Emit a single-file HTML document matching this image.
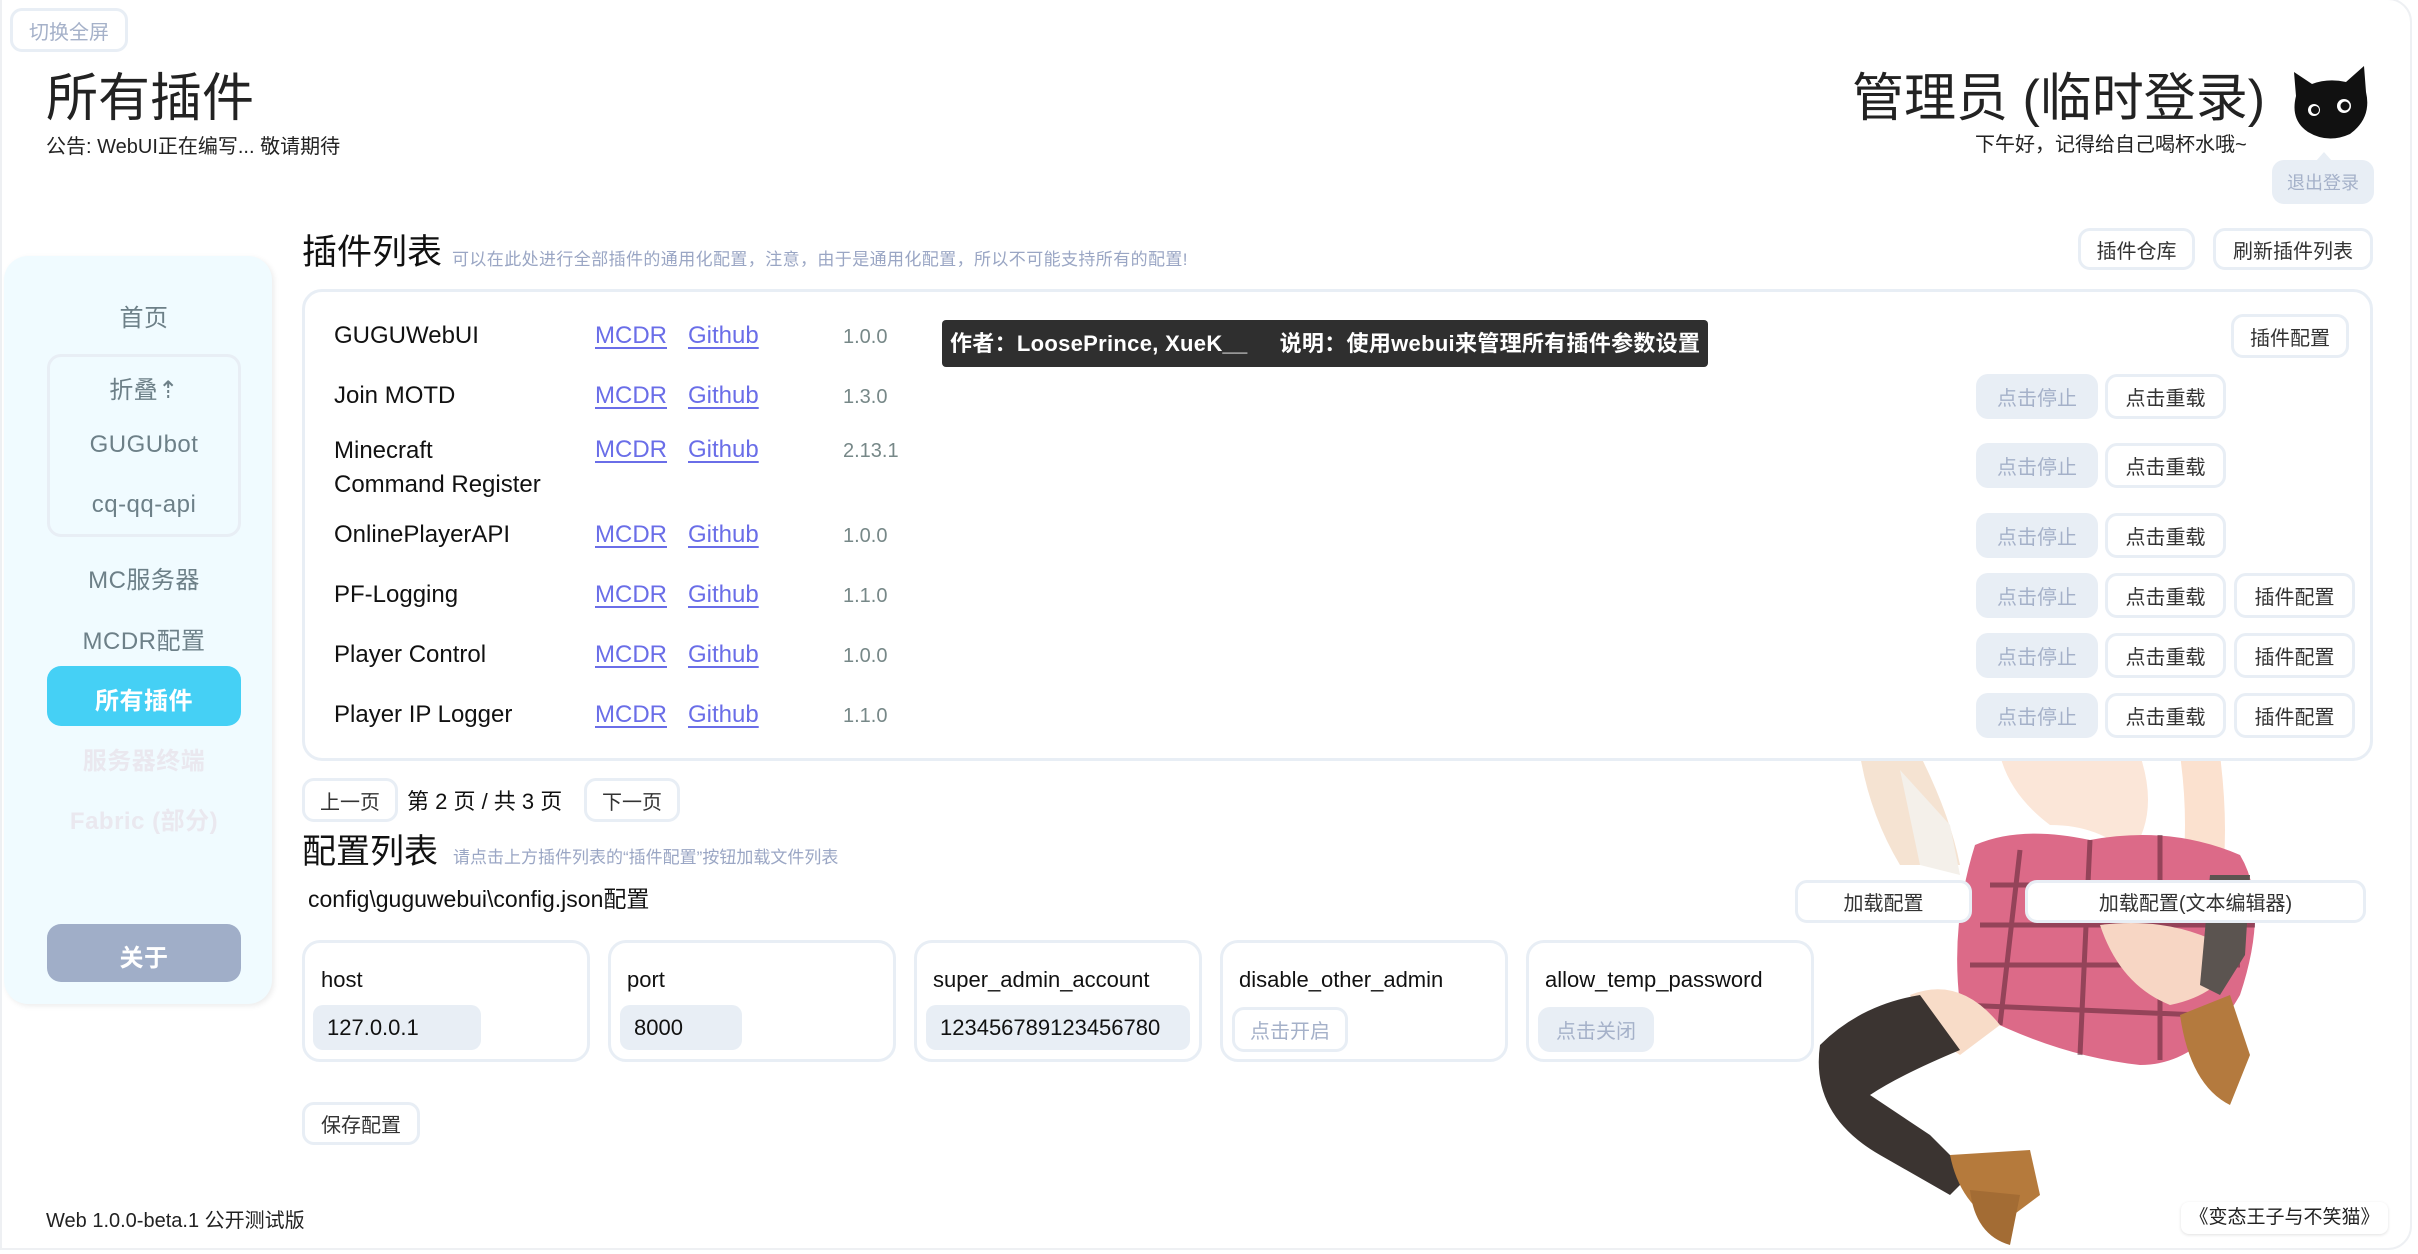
<!DOCTYPE html>
<html><head><meta charset="utf-8">
<style>
*{box-sizing:border-box;margin:0;padding:0}
body{width:2418px;height:1254px;overflow:hidden;background:#fff;font-family:"Liberation Sans","Noto Sans CJK SC",sans-serif;color:#222;position:relative}
.a{position:absolute;white-space:nowrap}
.frame{position:absolute;left:0;top:-2px;width:2412px;height:1252px;border:2px solid #eef0f3;border-radius:0 24px 24px 0}
.btn{position:absolute;border:3px solid #e8eef5;border-radius:12px;background:#fff;display:flex;align-items:center;justify-content:center;font-size:20px;color:#333}
.dis{background:#e8eef5;color:#a5b1c9}
.side{position:absolute;left:4px;top:256px;width:268px;height:748px;background:#f0fbff;border-radius:24px;box-shadow:2px 2px 6px rgba(0,0,0,.08)}
.si{position:absolute;left:0;width:280px;text-align:center;font-size:24px;color:#6d8088;letter-spacing:0.5px}
.row{position:absolute;font-size:24px;color:#111}
.lk{position:absolute;font-size:24px;color:#6a6ee8;text-decoration:underline;text-underline-offset:4px}
.ver{position:absolute;font-size:20px;color:#778888}
.card{position:absolute;top:940px;height:122px;border:3px solid #e8eef5;border-radius:18px;background:#fff}
.card .l{position:absolute;left:16px;top:24px;font-size:22px;color:#111}
.inp{position:absolute;top:62px;height:45px;background:#e8eef5;border-radius:10px;font-size:22px;padding-left:14px;line-height:45px;color:#111;overflow:hidden}
</style></head><body>
<div class="frame"></div>
<div class="btn dis" style="left:10px;top:8px;width:118px;height:44px;background:#fff;color:#a5b1c9;border-color:#e8eef5">切换全屏</div>
<div class="a" style="left:46px;top:56px;font-size:52px;color:#222">所有插件</div>
<div class="a" style="left:46px;top:130px;font-size:20px;color:#222">公告: WebUI正在编写... 敬请期待</div>

<div class="a" style="left:1852px;top:56px;font-size:52px;color:#222">管理员 (临时登录)</div>
<div class="a" style="left:1975px;top:128px;font-size:20px;color:#222">下午好，记得给自己喝杯水哦~</div>
<svg class="a" style="left:2288px;top:62px" width="84" height="80" viewBox="0 0 84 80">
<path d="M8 34 L6 10 L24 22 Q40 16 58 20 L76 4 L78 30 Q84 56 62 72 Q40 82 20 70 Q2 58 8 34Z" fill="#111"/>
<circle cx="26" cy="48" r="6" fill="#fff"/><circle cx="27" cy="48" r="4" fill="#111"/>
<circle cx="56" cy="44" r="7" fill="#fff"/><circle cx="57" cy="44" r="4.5" fill="#111"/>
</svg>
<div class="a" style="left:2316px;top:152px;width:0;height:0;border-left:8px solid transparent;border-right:8px solid transparent;border-bottom:9px solid #e8eef5"></div>
<div class="btn dis" style="left:2272px;top:160px;width:102px;height:44px;border:none;font-size:18px">退出登录</div>

<div class="side">
<div class="si" style="top:42px">首页</div>
<div style="position:absolute;left:43px;top:98px;width:194px;height:183px;border:3px solid #e8eef5;border-radius:14px"></div>
<div class="si" style="top:114px">折叠⇡</div>
<div class="si" style="top:175px">GUGUbot</div>
<div class="si" style="top:235px">cq-qq-api</div>
<div class="si" style="top:304px">MC服务器</div>
<div class="si" style="top:365px">MCDR配置</div>
<div style="position:absolute;left:43px;top:410px;width:194px;height:60px;background:#45d0f5;border-radius:14px"></div>
<div class="si" style="top:425px;color:#fff;font-weight:bold">所有插件</div>
<div class="si" style="top:485px;color:#eae8ef;font-weight:bold">服务器终端</div>
<div class="si" style="top:545px;color:#eae8ef;font-weight:bold">Fabric (部分)</div>
<div style="position:absolute;left:43px;top:668px;width:194px;height:58px;background:#a0aec8;border-radius:14px"></div>
<div class="si" style="top:682px;color:#fff;font-weight:bold">关于</div>
</div>

<div class="a" style="left:302px;top:224px;font-size:35px;color:#111">插件列表</div>
<div class="a" style="left:452px;top:245px;font-size:17px;color:#9aa6c4;letter-spacing:0.4px">可以在此处进行全部插件的通用化配置，注意，由于是通用化配置，所以不可能支持所有的配置!</div>
<div class="btn" style="left:2078px;top:228px;width:117px;height:42px">插件仓库</div>
<div class="btn" style="left:2213px;top:228px;width:160px;height:42px">刷新插件列表</div>

<!-- illustration -->
<svg class="a" style="left:1800px;top:755px" width="560" height="490" viewBox="0 0 560 490">
<path d="M60 0 L120 0 Q150 60 160 110 L100 110 Q70 60 60 0Z" fill="#f5e3d2"/>
<path d="M100 15 L150 70 L160 120 L120 110Z" fill="#f4f0ea"/>
<path d="M200 0 L340 0 Q360 60 330 100 Q300 70 250 70 Q210 40 200 0Z" fill="#fbe6d8"/>
<path d="M380 0 L420 0 Q430 80 420 140 L380 140 Q390 70 380 0Z" fill="#fbe1cf"/>
<path d="M175 90 Q220 70 290 85 Q370 70 440 100 Q470 150 440 240 Q400 310 340 310 Q250 300 160 250 Q150 170 175 90Z" fill="#dc6a88"/>
<path d="M190 130 L450 130 M180 170 L455 170 M170 210 L440 210 M160 250 L400 260 M220 95 L200 270 M290 85 L280 300 M360 80 L360 305" stroke="#5a2233" stroke-width="5" fill="none" opacity=".55"/>
<path d="M300 170 Q380 160 440 200 Q420 240 370 250 Q320 230 300 170Z" fill="#f7d6c4"/>
<path d="M110 240 Q160 220 200 270 L160 300 Q130 280 110 240Z" fill="#f8dcc8"/>
<path d="M20 290 Q60 250 120 240 L160 295 Q100 320 70 340 L130 380 L170 420 L150 440 L80 400 Q10 360 20 290Z" fill="#3b3431"/>
<path d="M150 400 L230 395 L240 440 L200 470 Q160 450 150 400Z" fill="#b57a3c"/>
<path d="M170 435 L220 440 L210 490 Q175 480 170 435Z" fill="#a36c34"/>
<path d="M410 120 L450 120 L445 200 L420 240 L400 230Z" fill="#5b5450"/>
<path d="M380 260 L430 240 L450 300 L430 350 Q390 330 380 260Z" fill="#b47a3e"/>
</svg>

<div style="position:absolute;left:302px;top:289px;width:2071px;height:472px;border:3px solid #e8eef5;border-radius:20px;background:#fff"></div>
<div class="row" style="left:334px;top:322px">GUGUWebUI</div>
<div class="row" style="left:334px;top:382px">Join MOTD</div>
<div class="row" style="left:334px;top:434px;line-height:34px">Minecraft<br>Command Register</div>
<div class="row" style="left:334px;top:521px">OnlinePlayerAPI</div>
<div class="row" style="left:334px;top:581px">PF-Logging</div>
<div class="row" style="left:334px;top:641px">Player Control</div>
<div class="row" style="left:334px;top:701px">Player IP Logger</div>

<div class="lk" style="left:595px;top:322px">MCDR</div><div class="lk" style="left:688px;top:322px">Github</div><div class="ver" style="left:843px;top:326px">1.0.0</div>
<div class="lk" style="left:595px;top:382px">MCDR</div><div class="lk" style="left:688px;top:382px">Github</div><div class="ver" style="left:843px;top:386px">1.3.0</div>
<div class="lk" style="left:595px;top:436px">MCDR</div><div class="lk" style="left:688px;top:436px">Github</div><div class="ver" style="left:843px;top:440px">2.13.1</div>
<div class="lk" style="left:595px;top:521px">MCDR</div><div class="lk" style="left:688px;top:521px">Github</div><div class="ver" style="left:843px;top:525px">1.0.0</div>
<div class="lk" style="left:595px;top:581px">MCDR</div><div class="lk" style="left:688px;top:581px">Github</div><div class="ver" style="left:843px;top:585px">1.1.0</div>
<div class="lk" style="left:595px;top:641px">MCDR</div><div class="lk" style="left:688px;top:641px">Github</div><div class="ver" style="left:843px;top:645px">1.0.0</div>
<div class="lk" style="left:595px;top:701px">MCDR</div><div class="lk" style="left:688px;top:701px">Github</div><div class="ver" style="left:843px;top:705px">1.1.0</div>

<div class="a" style="left:942px;top:320px;width:766px;height:47px;background:#2f2f2f;border-radius:4px;color:#fff;font-size:22px;font-weight:bold;line-height:47px;padding-left:8px;letter-spacing:0.3px">作者：LoosePrince, XueK__&nbsp;&nbsp;&nbsp;&nbsp;&nbsp;说明：使用webui来管理所有插件参数设置</div>

<div class="btn" style="left:2231px;top:314px;width:118px;height:44px">插件配置</div>
<div class="btn dis" style="left:1976px;top:374px;width:122px;height:45px;border:none">点击停止</div><div class="btn" style="left:2105px;top:374px;width:121px;height:45px">点击重载</div>
<div class="btn dis" style="left:1976px;top:443px;width:122px;height:45px;border:none">点击停止</div><div class="btn" style="left:2105px;top:443px;width:121px;height:45px">点击重载</div>
<div class="btn dis" style="left:1976px;top:513px;width:122px;height:45px;border:none">点击停止</div><div class="btn" style="left:2105px;top:513px;width:121px;height:45px">点击重载</div>
<div class="btn dis" style="left:1976px;top:573px;width:122px;height:45px;border:none">点击停止</div><div class="btn" style="left:2105px;top:573px;width:121px;height:45px">点击重载</div><div class="btn" style="left:2234px;top:573px;width:121px;height:45px">插件配置</div>
<div class="btn dis" style="left:1976px;top:633px;width:122px;height:45px;border:none">点击停止</div><div class="btn" style="left:2105px;top:633px;width:121px;height:45px">点击重载</div><div class="btn" style="left:2234px;top:633px;width:121px;height:45px">插件配置</div>
<div class="btn dis" style="left:1976px;top:693px;width:122px;height:45px;border:none">点击停止</div><div class="btn" style="left:2105px;top:693px;width:121px;height:45px">点击重载</div><div class="btn" style="left:2234px;top:693px;width:121px;height:45px">插件配置</div>

<div class="btn" style="left:302px;top:778px;width:96px;height:44px">上一页</div>
<div class="a" style="left:407px;top:784px;font-size:22px;color:#111">第 2 页 / 共 3 页</div>
<div class="btn" style="left:584px;top:778px;width:96px;height:44px">下一页</div>

<div class="a" style="left:302px;top:824px;font-size:34px;color:#111">配置列表</div>
<div class="a" style="left:453px;top:843px;font-size:17px;color:#9aa6c4">请点击上方插件列表的“插件配置”按钮加载文件列表</div>
<div class="a" style="left:308px;top:880px;font-size:23px;color:#111">config\guguwebui\config.json配置</div>
<div class="btn" style="left:1795px;top:880px;width:177px;height:43px">加载配置</div>
<div class="btn" style="left:2025px;top:880px;width:341px;height:43px">加载配置(文本编辑器)</div>

<div class="card" style="left:302px;width:288px"><div class="l">host</div><div class="inp" style="left:8px;width:168px">127.0.0.1</div></div>
<div class="card" style="left:608px;width:288px"><div class="l">port</div><div class="inp" style="left:9px;width:122px">8000</div></div>
<div class="card" style="left:914px;width:288px"><div class="l">super_admin_account</div><div class="inp" style="left:9px;width:264px">123456789123456780</div></div>
<div class="card" style="left:1220px;width:288px"><div class="l">disable_other_admin</div><div class="btn" style="left:9px;top:64px;width:116px;height:45px;color:#a5b1c9">点击开启</div></div>
<div class="card" style="left:1526px;width:288px"><div class="l">allow_temp_password</div><div class="btn dis" style="left:9px;top:64px;width:116px;height:45px;border:none">点击关闭</div></div>

<div class="btn" style="left:302px;top:1102px;width:118px;height:43px">保存配置</div>
<div class="a" style="left:46px;top:1204px;font-size:20px;color:#222">Web 1.0.0-beta.1 公开测试版</div>
<div class="a" style="left:2181px;top:1202px;width:207px;height:32px;background:#fff;border-radius:8px;box-shadow:0 1px 3px rgba(0,0,0,.12);font-size:19px;line-height:32px;text-align:center;color:#222">《变态王子与不笑猫》</div>
</body></html>
